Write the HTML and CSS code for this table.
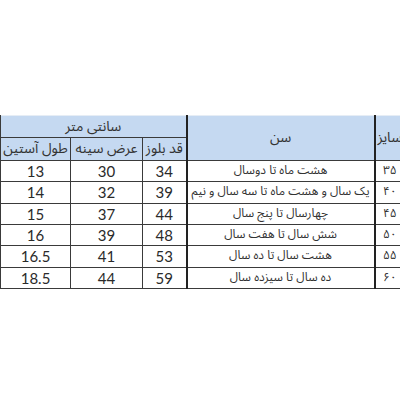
FILE: index.html
```html
<!DOCTYPE html>
<html lang="fa">
<head>
<meta charset="utf-8">
<link rel="stylesheet" href="styles.css">
</head>
<body>
<div class="frame">
  <table class="size-table" dir="rtl">
    <colgroup>
      <col class="c-size">
      <col class="c-age">
      <col class="c-len">
      <col class="c-chest">
      <col class="c-sleeve">
    </colgroup>
    <thead>
      <tr class="h1">
        <th rowspan="2" class="fa thick-l">سایز</th>
        <th rowspan="2" class="fa thick-l">سن</th>
        <th colspan="3" class="fa">سانتی متر</th>
      </tr>
      <tr class="h2">
        <th class="fa">قد بلوز</th>
        <th class="fa">عرض سینه</th>
        <th class="fa">طول آستین</th>
      </tr>
    </thead>
    <tbody>
      <tr><td class="fa thick-l">۳۵</td><td class="fa thick-l">هشت ماه تا دوسال</td><td class="num">34</td><td class="num">30</td><td class="num">13</td></tr>
      <tr><td class="fa thick-l">۴۰</td><td class="fa thick-l">یک سال و هشت ماه تا سه سال و نیم</td><td class="num">39</td><td class="num">32</td><td class="num">14</td></tr>
      <tr><td class="fa thick-l">۴۵</td><td class="fa thick-l">چهارسال تا پنج سال</td><td class="num">44</td><td class="num">37</td><td class="num">15</td></tr>
      <tr><td class="fa thick-l">۵۰</td><td class="fa thick-l">شش سال تا هفت سال</td><td class="num">48</td><td class="num">39</td><td class="num">16</td></tr>
      <tr><td class="fa thick-l">۵۵</td><td class="fa thick-l">هشت سال تا ده سال</td><td class="num">53</td><td class="num">41</td><td class="num">16.5</td></tr>
      <tr><td class="fa thick-l">۶۰</td><td class="fa thick-l">ده سال تا سیزده سال</td><td class="num">59</td><td class="num">44</td><td class="num">18.5</td></tr>
    </tbody>
  </table>
</div>
</body>
</html>
```
FILE: styles.css
```css
html, body {
  margin: 0;
  padding: 0;
  background: #ffffff;
}
.frame {
  width: 400px;
  height: 400px;
  overflow: hidden;
  padding-top: 115px;
  box-sizing: border-box;
}
.size-table {
  width: 404px;
  table-layout: fixed;
  border-collapse: collapse;
  color: #2a2a2a;
}
.c-size { width: 30px; }
.c-age { width: 188px; }
.c-len { width: 44px; }
.c-chest { width: 72px; }
.c-sleeve { width: 70px; }

.size-table th,
.size-table td {
  border: 1px solid #3a3a3a;
  padding: 0 1px;
  text-align: center;
  vertical-align: middle;
  white-space: nowrap;
  line-height: 18px;
}
.size-table thead th {
  background: #c5d9f1;
  font-weight: normal;
  font-size: 14px;
}
.size-table .h1 th {
  border-top: 1px solid #e6edf5;
  height: 21px;
}
.size-table .h2 th {
  height: 22px;
}
.size-table tbody td {
  height: 20.33px;
}
.size-table .thick-l {
  border-left: 2px solid #222;
}
.fa {
  font-family: "Noto Sans Arabic", "Noto Naskh Arabic", "DejaVu Sans", sans-serif;
  font-size: 12px;
  color: #333;
}
.num {
  font-family: "Lato", "Open Sans", sans-serif;
  font-size: 15px;
  color: #2a2a2a;
}
```
